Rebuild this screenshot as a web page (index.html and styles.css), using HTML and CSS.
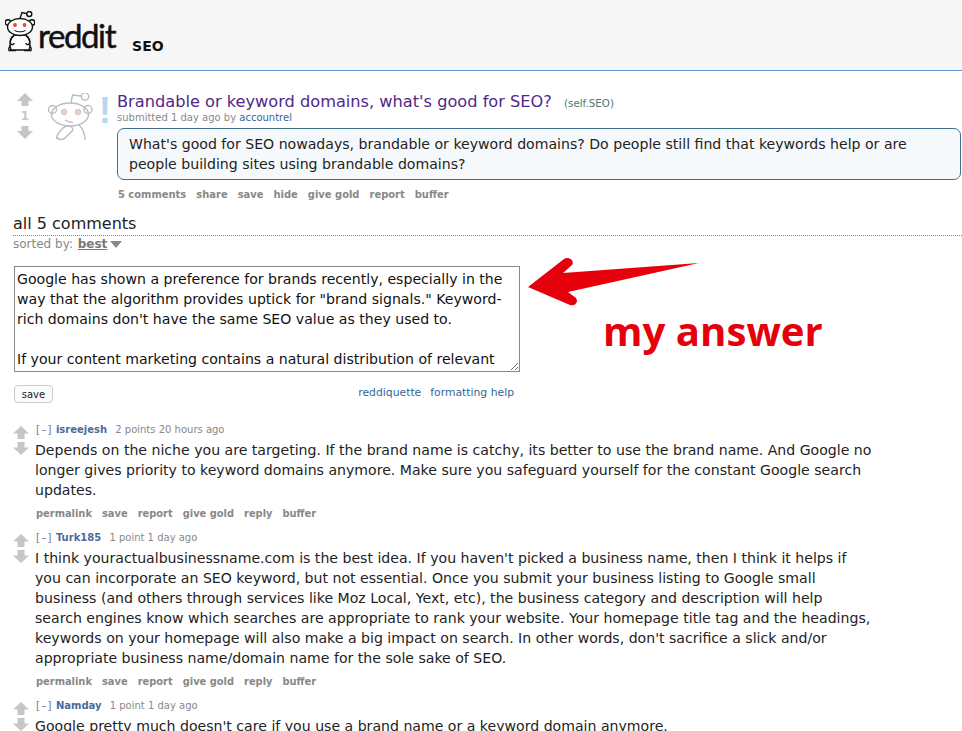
FILE: index.html
```html
<!DOCTYPE html>
<html lang="en">
<head>
<meta charset="utf-8">
<title>Brandable or keyword domains - SEO</title>
<link rel="stylesheet" href="styles.css">
</head>
<body>
<header class="site-header">
  <svg class="alien" viewBox="5 11 30 42" width="30" height="42" aria-hidden="true">
    <g fill="#fff" stroke="#111" stroke-width="1.400">
      <path d="M12 44c-2 1-4 5-3 6.500h7M28 44c2 1 4 5 3 6.500h-7"/>
      <path d="M14 35c-4 3-5 10-3 15h18c2-5 1-12-3-15z"/>
      <path d="M14 36c-3 1-5 5-3 8 1 1 3 1 3-1M26 36c3 1 5 5 3 8-1 1-3 1-3-1" fill="none"/>
      <circle cx="8" cy="22.500" r="2.800"/><circle cx="32" cy="22.500" r="2.800"/>
      <ellipse cx="20" cy="27" rx="12.500" ry="8.500"/>
      <path d="M20 18.500l2-6 5 1.200" fill="none"/>
      <circle cx="29.300" cy="14" r="2.500"/>
    </g>
    <circle cx="15" cy="25" r="1.900" fill="#f5402a"/><circle cx="24.500" cy="25" r="1.900" fill="#f5402a"/>
    <path d="M14.500 30.500c3 1.800 8 1.800 11 0" fill="none" stroke="#111" stroke-width="1"/>
  </svg>
  <span class="wordmark">reddit</span>
  <span class="subreddit">SEO</span>
</header>

<main class="content">
  <section class="post">
    <div class="votes post-votes">
      <svg class="arrow" viewBox="0 0 16 13" width="16" height="13"><path d="M8 0l8 8h-4.500v5h-7V8H0z"/></svg>
      <span class="score">1</span>
      <svg class="arrow" viewBox="0 0 16 13" width="16" height="13"><path d="M8 13l8-8h-4.500V0h-7v5H0z"/></svg>
    </div>
    <svg class="thumb" viewBox="47 93 46 48" width="46" height="48" aria-hidden="true">
      <g fill="none" stroke="#bdbdbd" stroke-width="1.400">
        <circle cx="52.500" cy="109.500" r="4"/><circle cx="88" cy="109.500" r="4"/>
        <ellipse cx="70" cy="114.500" rx="18.500" ry="11.500"/>
        <circle cx="85" cy="96.500" r="3.700"/>
        <path d="M71 103l1.500-8 9 1"/>
        <path d="M66 126c-4 2-9 8-9.500 12 4 2 7 2 9-.5l7-7c1-3-2-5-6.500-4.500"/>
        <path d="M79 125c4 4 6 9 6 15"/>
        <path d="M65 120c2.500 1.500 5 2.500 8 2.500"/>
      </g>
      <circle cx="64" cy="112" r="2.800" fill="#f4cdbb" stroke="#ccc"/>
      <circle cx="78" cy="112" r="2.800" fill="#f4cdbb" stroke="#ccc"/>
    </svg>
    <span class="bang">!</span>
    <div class="post-body">
      <p class="post-title"><a class="title-link">Brandable or keyword domains, what's good for SEO?</a> <span class="domain">(self.SEO)</span></p>
      <p class="tagline">submitted 1 day ago by <a class="author-plain">accountrel</a></p>
      <div class="selftext">What's good for SEO nowadays, brandable or keyword domains? Do people still find that keywords help or are people building sites using brandable domains?</div>
      <ul class="actions post-actions">
        <li>5 comments</li><li>share</li><li>save</li><li>hide</li><li>give gold</li><li>report</li><li>buffer</li>
      </ul>
    </div>
  </section>

  <section class="comments-head">
    <h2 class="all-comments">all 5 comments</h2>
    <p class="sorted">sorted by: <b class="sort-value">best</b><span class="caret"></span></p>
  </section>

  <form class="reply-form">
    <textarea class="reply-box" rows="5">Google has shown a preference for brands recently, especially in the way that the algorithm provides uptick for "brand signals." Keyword-rich domains don't have the same SEO value as they used to.

If your content marketing contains a natural distribution of relevant</textarea>
    <div class="form-row">
      <button class="save-btn" type="button">save</button>
      <span class="help-links"><a>reddiquette</a><a>formatting help</a></span>
    </div>
  </form>

  <article class="comment">
    <div class="votes">
      <svg class="arrow" viewBox="0 0 16 13" width="16" height="13"><path d="M8 0l8 7.500h-4.500V13h-7V7.500H0z"/></svg>
      <svg class="arrow" viewBox="0 0 16 13" width="16" height="13"><path d="M8 13l8-7.500h-4.500V0h-7v5.500H0z"/></svg>
    </div>
    <div class="comment-body">
      <p class="meta"><span class="toggle">[–]</span> <a class="author">isreejesh</a> <span class="points">2 points 20 hours ago</span></p>
      <p class="text">Depends on the niche you are targeting. If the brand name is catchy, its better to use the brand name. And Google no longer gives priority to keyword domains anymore. Make sure you safeguard yourself for the constant Google search updates.</p>
      <ul class="actions"><li>permalink</li><li>save</li><li>report</li><li>give gold</li><li>reply</li><li>buffer</li></ul>
    </div>
  </article>

  <article class="comment">
    <div class="votes">
      <svg class="arrow" viewBox="0 0 16 13" width="16" height="13"><path d="M8 0l8 7.500h-4.500V13h-7V7.500H0z"/></svg>
      <svg class="arrow" viewBox="0 0 16 13" width="16" height="13"><path d="M8 13l8-7.500h-4.500V0h-7v5.500H0z"/></svg>
    </div>
    <div class="comment-body">
      <p class="meta"><span class="toggle">[–]</span> <a class="author">Turk185</a> <span class="points">1 point 1 day ago</span></p>
      <p class="text">I think youractualbusinessname.com is the best idea. If you haven't picked a business name, then I think it helps if you can incorporate an SEO keyword, but not essential. Once you submit your business listing to Google small business (and others through services like Moz Local, Yext, etc), the business category and description will help search engines know which searches are appropriate to rank your website. Your homepage title tag and the headings, keywords on your homepage will also make a big impact on search. In other words, don't sacrifice a slick and/or appropriate business name/domain name for the sole sake of SEO.</p>
      <ul class="actions"><li>permalink</li><li>save</li><li>report</li><li>give gold</li><li>reply</li><li>buffer</li></ul>
    </div>
  </article>

  <article class="comment">
    <div class="votes">
      <svg class="arrow" viewBox="0 0 16 13" width="16" height="13"><path d="M8 0l8 7.500h-4.500V13h-7V7.500H0z"/></svg>
      <svg class="arrow" viewBox="0 0 16 13" width="16" height="13"><path d="M8 13l8-7.500h-4.500V0h-7v5.500H0z"/></svg>
    </div>
    <div class="comment-body">
      <p class="meta"><span class="toggle">[–]</span> <a class="author">Namday</a> <span class="points">1 point 1 day ago</span></p>
      <p class="text">Google pretty much doesn't care if you use a brand name or a keyword domain anymore.</p>
    </div>
  </article>
</main>

<svg class="red-arrow" viewBox="0 0 172 50" width="172" height="50" aria-hidden="true">
  <path d="M0 30L36 2c5-3 11 2 8 6L35 16 171 6 40 35l8 6c3 5-2 8-6 7z" fill="#e6000b"/>
</svg>
<span class="my-answer">my answer</span>
</body>
</html>
```

FILE: styles.css
```css
* { box-sizing: border-box; }
html, body { margin: 0; padding: 0; height: 731px; overflow: hidden; background: #fff; }
body { font-family: "DejaVu Sans", Verdana, sans-serif; color: #222; position: relative; }
p, ul, h2 { margin: 0; padding: 0; }
ul { list-style: none; }

.site-header {
  height: 71px;
  background: #f6f6f6;
  border-bottom: 1px solid #5f99cf;
  display: flex;
  align-items: flex-start;
  padding: 11px 0 0 5px;
}
.alien { flex: none; display: block; }
.wordmark {
  font-family: "Lato", "Noto Sans", sans-serif;
  font-size: 33px;
  line-height: 40px;
  letter-spacing: -1.400px;
  -webkit-text-stroke: 0.5px #111;
  color: #111;
  margin: 4px 0 0 3px;
}
.subreddit {
  font-family: "DejaVu Sans", sans-serif;
  font-weight: 700;
  font-size: 14px;
  line-height: 18px;
  color: #111;
  margin: 26px 0 0 17px;
}

.content { padding: 20px 0 0 13px; }

.post { display: flex; align-items: flex-start; }
.votes { display: flex; flex-direction: column; align-items: center; flex: none; }
.arrow { fill: #c6c6c6; display: block; }
.post-votes { width: 24px; margin-top: 2px; }
.score { font-size: 12px; line-height: 20px; font-weight: 700; color: #c6c6c6; height: 20px; }
.thumb { flex: none; margin: 2px 0 0 10px; }
.bang { font-size: 37px; line-height: 40px; font-weight: 700; color: #b6d9f2; width: 14px; flex: none; text-align: center; font-family: "Liberation Sans", sans-serif; margin: 0 0 0 5px; }
.post-body { flex: 1; min-width: 0; padding-left: 5px; }
.post-title { font-size: 16.200px; line-height: 20px; padding-top: 1px; }
.title-link { color: #50288a; }
.domain { font-size: 10.300px; color: #4b7a70; margin-left: 7px; }
.tagline { font-size: 10px; line-height: 12px; color: #888; margin-top: -1px; }
.author-plain { color: #369; }
.selftext {
  margin-top: 4px;
  border: 1px solid #40708a;
  border-radius: 7px;
  background: #f6f9fb;
  font-size: 14.100px;
  line-height: 20px;
  padding: 5px 11px;
  color: #222;
  width: 844px;
}
.actions { display: flex; gap: 10px; font-size: 9.900px; line-height: 14px; font-weight: 700; color: #888; }
.post-actions { margin: 8px 0 0 1px; font-size: 9.950px; }

.comments-head { margin-top: 12px; }
.all-comments { font-size: 16px; font-weight: 400; line-height: 20px; color: #222; border-bottom: 1px dotted #888; padding-bottom: 1px; }
.sorted { font-size: 12px; line-height: 14px; color: #888; margin-top: 1px; }
.sort-value { text-decoration: underline; color: #777; margin-left: 1px; }
.caret { display: inline-block; width: 0; height: 0; border: 6px solid transparent; border-top: 7px solid #888; border-bottom: 0; margin-left: 3px; vertical-align: 0; }

.reply-form { margin: 15px 0 0 1px; width: 506px; }
.reply-box {
  display: block;
  width: 506px;
  height: 106px;
  border: 1px solid #888;
  padding: 2px 2px;
  font-family: "DejaVu Sans", sans-serif;
  font-size: 14.100px;
  line-height: 20px;
  color: #111;
  background: #fff;
  overflow: hidden;
  border-radius: 0;
  margin: 0;
}
.form-row { display: flex; justify-content: space-between; align-items: center; margin-top: 13px; }
.save-btn {
  font-family: "DejaVu Sans", sans-serif;
  font-size: 10px;
  height: 18px;
  width: 39px;
  padding: 0;
  background: #fbfbfb;
  border: 1px solid #ccc;
  border-radius: 4px;
  color: #222;
}
.help-links { display: flex; gap: 9px; font-size: 10.800px; color: #369; margin: 0 6px 4px 0; }

.comment { display: flex; align-items: flex-start; margin-top: 20px; }
.comment + .comment { margin-top: 10px; }
.comment .votes { width: 16px; margin-top: 3px; gap: 3px; margin-right: 6px; }
.comment-body { width: 837px; }
.meta { font-size: 10px; line-height: 14px; color: #888; padding-left: 1px; }
.toggle { color: #6a7a96; letter-spacing: 1.300px; }
.author { font-weight: 700; color: #4f6a9a; margin: 0 5px 0 0; }
.text { font-size: 14.100px; line-height: 20px; color: #222; margin-top: 3px; }
.comment .actions { margin-top: 7px; padding-left: 1px; }

.red-arrow { position: absolute; left: 528px; top: 257px; }
.my-answer {
  position: absolute;
  left: 603px;
  top: 306px;
  font-family: "Open Sans", "Noto Sans", sans-serif;
  font-weight: 700;
  font-size: 40.200px;
  line-height: 50px;
  color: #e6000b;
}
```
